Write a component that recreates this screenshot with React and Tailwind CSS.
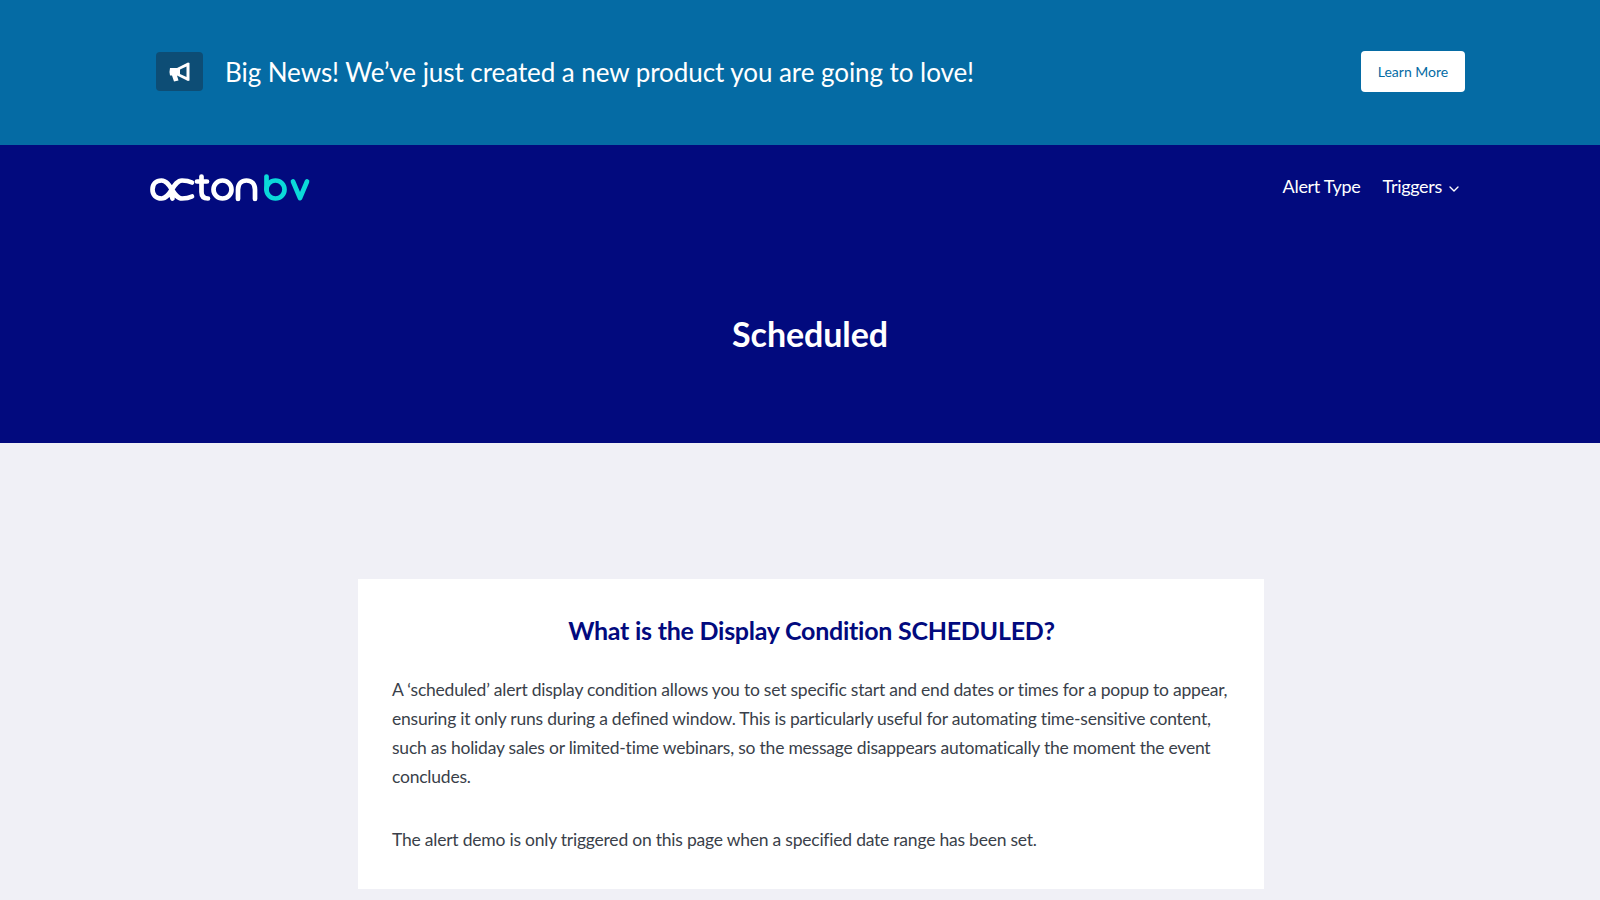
import { ChevronDown } from 'lucide-react';

const Logo = () => (
    <svg width="164" height="32" viewBox="0 0 164 32" fill="none" strokeWidth="4.7" strokeLinecap="round" strokeLinejoin="round" className="block">
        {/* a + c joined loop */}
        <path d="M44 10.5 C41 9 38 8.5 34 8.5 C25 8.5 23 26.5 13.5 26.5 C8 26.5 4.5 23 4.5 17.5 C4.5 12 8 8.5 13.5 8.5 C23 8.5 25 26.5 34 26.5 C38 26.5 41 26 44 24.5 M22.5 20 L24.5 26.5" stroke="#fff" />
        {/* t */}
        <path d="M53.5 4.5 L53.5 20 C53.5 24.5 56 26.5 60 26.5 M49 9.5 L59 9.5" stroke="#fff" />
        {/* o */}
        <circle cx="74.5" cy="17.5" r="9" stroke="#fff" />
        {/* n */}
        <path d="M90 27 L90 17.5 C90 12 93.5 8.5 98.5 8.5 C103.5 8.5 107 12 107 17.5 L107 27" stroke="#fff" />
        {/* b */}
        <path d="M118.5 4.5 L118.5 17.5" stroke="#0bd9d9" />
        <circle cx="127.5" cy="17.5" r="9" stroke="#0bd9d9" />
        {/* v */}
        <path d="M145 9.5 L152 26 L159 9.5" stroke="#0bd9d9" />
    </svg>
);

const Megaphone = () => (
    <svg width="21" height="20" viewBox="0 0 21 20" fill="#fff" fillRule="evenodd" className="block">
        <path d="M1 6 L8 6 L19 0.5 L20.5 1 L20.5 18.5 L19 19 L8 13.5 L9.5 18.5 L5 19.5 L3 13.5 L1 13.5 Q0 10 1 6 Z M11 7.5 L11 12 L17.5 15 L17.5 4.5 Z" />
    </svg>
);

const App = () => {
    return (
        <div className="min-h-[900px] bg-[#f0f0f6] font-['Lato',sans-serif] overflow-hidden">
            {/* Top banner */}
            <div className="h-[145px] bg-[#056ba4] flex items-center justify-between pl-[156px] pr-[135px] pb-[2px]">
                <div className="flex items-center gap-[22px]">
                    <span className="w-[47px] h-[39px] bg-[#0d4d75] rounded flex items-center justify-center">
                        <Megaphone />
                    </span>
                    <p className="text-[26px] text-white tracking-[-0.06px] mt-[2px]">Big News! We’ve just created a new product you are going to love!</p>
                </div>
                <a className="w-[104px] h-[41px] bg-white rounded flex items-center justify-center text-[14px] text-[#056ba4]">Learn More</a>
            </div>

            {/* Nav + title */}
            <div className="h-[298px] bg-[#020a7e] pl-[148px] pr-[138px] pt-[27px] text-white">
                <div className="flex items-start justify-between">
                    <Logo />
                    <nav className="flex items-center gap-[22px] pt-[1px] text-[18px] tracking-[-0.3px]">
                        <a>Alert Type</a>
                        <a className="flex items-center gap-1">Triggers <ChevronDown className="w-4 h-4 mt-1" /></a>
                    </nav>
                </div>
                <h1 className="mt-[104px] pl-[10px] text-center text-[34px] font-bold tracking-[-0.1px]">Scheduled</h1>
            </div>

            {/* Card */}
            <div className="w-[906px] ml-[358px] mt-[136px] mb-[10px] bg-white pl-[34px] pr-[33px] pt-[33px] pb-[35px]">
                <h2 className="text-center text-[25px] font-bold text-[#020a7e] tracking-[-0.25px] mb-[25px]">What is the Display Condition SCHEDULED?</h2>
                <p className="text-[17.5px] leading-[29px] text-[#3a3f4a] tracking-[-0.22px] mb-[34px]">
                    A ‘scheduled’ alert display condition allows you to set specific start and end dates or times for a popup to appear, ensuring it only runs during a defined window. This is particularly useful for automating time-sensitive content, such as holiday sales or limited-time webinars, so the message disappears automatically the moment the event concludes.
                </p>
                <p className="text-[17.5px] leading-[29px] text-[#3a3f4a] tracking-[-0.22px]">The alert demo is only triggered on this page when a specified date range has been set.</p>
            </div>
        </div>
    );
};

export default App;
